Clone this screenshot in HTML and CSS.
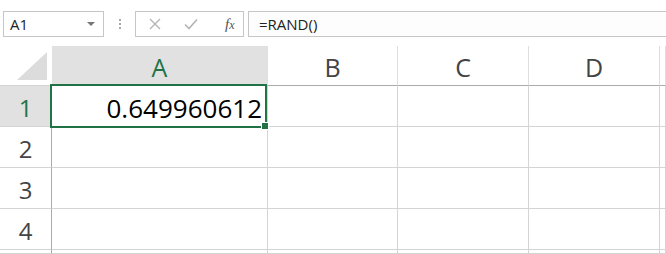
FILE: index.html
```html
<!DOCTYPE html>
<html lang="en">

<head>
    <meta charset="UTF-8">
    <meta name="viewport" content="width=device-width, initial-scale=1.0">
    <title>Sheet</title>
    <link rel="stylesheet" href="styles.css">
</head>

<body>
    <!-- 编辑栏 -->
    <div class="formulabar">
        <div class="namebox">
            <span>A1</span>
            <i class="caret"></i>
        </div>
        <div class="grip">
            <b></b><b></b><b></b>
        </div>
        <div class="fbtns">
            <svg class="fbtn" width="12" height="12" viewBox="0 0 12 12">
                <path d="M1 1L11 11M11 1L1 11" stroke="#b4b4b4" stroke-width="1.4" fill="none" />
            </svg>
            <svg class="fbtn" width="14" height="12" viewBox="0 0 14 12">
                <path d="M1 6.5L5 10.5L13 1.5" stroke="#b4b4b4" stroke-width="1.6" fill="none" />
            </svg>
            <span class="fx">f<small>x</small></span>
        </div>
        <div class="finput">=RAND()</div>
    </div>

    <!-- 表格 -->
    <div class="sheet">
        <div class="corner">
            <svg width="50" height="38" viewBox="0 0 50 38">
                <polygon points="17,34 47,34 47,6" fill="#dcdcdc" />
            </svg>
        </div>
        <div class="colhead active">A</div>
        <div class="colhead">B</div>
        <div class="colhead">C</div>
        <div class="colhead">D</div>
        <div class="colhead"></div>

        <div class="rowhead active">1</div>
        <div class="cell num">
            0.649960612
            <div class="sel"><i class="handle"></i></div>
        </div>
        <div class="cell"></div>
        <div class="cell"></div>
        <div class="cell"></div>
        <div class="cell"></div>

        <div class="rowhead">2</div>
        <div class="cell"></div>
        <div class="cell"></div>
        <div class="cell"></div>
        <div class="cell"></div>
        <div class="cell"></div>

        <div class="rowhead">3</div>
        <div class="cell"></div>
        <div class="cell"></div>
        <div class="cell"></div>
        <div class="cell"></div>
        <div class="cell"></div>

        <div class="rowhead">4</div>
        <div class="cell"></div>
        <div class="cell"></div>
        <div class="cell"></div>
        <div class="cell"></div>
        <div class="cell"></div>

        <div class="rowhead"></div>
        <div class="cell"></div>
        <div class="cell"></div>
        <div class="cell"></div>
        <div class="cell"></div>
        <div class="cell"></div>
    </div>
</body>

</html>
```

FILE: styles.css
```css
* {
    margin: 0;
    padding: 0;
    box-sizing: border-box;
}

body {
    width: 666px;
    height: 254px;
    overflow: hidden;
    background: #fff;
    font-family: "Open Sans", "Noto Sans", sans-serif;
    color: #222;
}

i {
    font-style: normal;
}

/* 编辑栏 */
.formulabar {
    display: flex;
    height: 26px;
    margin: 11px 0 9px 3px;
}

.namebox {
    display: flex;
    width: 101px;
    padding: 0 6px 0 6px;
    border: 1px solid #c6c6c6;
    align-items: center;
    justify-content: space-between;
    font-size: 15px;
}

.caret {
    width: 0;
    height: 0;
    margin-right: 2px;
    border-left: 4px solid transparent;
    border-right: 4px solid transparent;
    border-top: 4px solid #777;
}

.grip {
    display: flex;
    width: 31px;
    flex-direction: column;
    align-items: center;
    justify-content: center;
    gap: 2px;
}

.grip b {
    width: 2px;
    height: 2px;
    background: #a8a8a8;
}

.fbtns {
    display: flex;
    width: 109px;
    border: 1px solid #c6c6c6;
    align-items: center;
}

.fbtns svg:first-child {
    margin-left: 13px;
}

.fbtns svg:nth-child(2) {
    margin-left: 23px;
}

.fx {
    margin-left: 27px;
    font-family: "Liberation Serif", serif;
    font-style: italic;
    font-size: 15px;
    color: #555;
}

.fx small {
    font-size: 12px;
}

.finput {
    flex: 1;
    display: flex;
    margin: 0 -1px 0 4px;
    padding-left: 10px;
    border: 1px solid #c6c6c6;
    align-items: center;
    font-size: 15px;
    background: #fdfdfd;
}

/* 表格 */
.sheet {
    display: grid;
    height: 208px;
    grid-template-columns: 52px 216px 130px 131px 131px 1fr;
    grid-template-rows: 40px repeat(4, 41px) 1fr;
}

.corner {
    border-right: 1px solid #fff;
    border-bottom: 1px solid #d4d4d4;
}

.corner svg {
    display: block;
}

.colhead {
    display: flex;
    border-right: 1px solid #dedede;
    border-bottom: 1px solid #ababab;
    align-items: center;
    justify-content: center;
    padding-top: 3px;
    font-size: 25px;
    color: #444;
}

.colhead.active,
.rowhead.active {
    background: #e1e1e1;
    color: #217346;
}

.rowhead {
    display: flex;
    border-right: 1px solid #ababab;
    border-bottom: 1px solid #d4d4d4;
    align-items: center;
    justify-content: center;
    padding-top: 2px;
    font-size: 24px;
    color: #444;
}

.cell {
    border-right: 1px solid #d4d4d4;
    border-bottom: 1px solid #d4d4d4;
}

.num {
    position: relative;
    display: flex;
    padding: 4px 5px 0 0;
    align-items: center;
    justify-content: flex-end;
    font-size: 26px;
    color: #000;
}

/* 选中框 */
.sel {
    position: absolute;
    left: -2px;
    top: -2px;
    width: 217px;
    height: 44px;
    border: 2px solid #217346;
}

.handle {
    position: absolute;
    left: 209px;
    top: 36px;
    width: 8px;
    height: 8px;
    border: 1px solid #fff;
    background: #217346;
}
```
